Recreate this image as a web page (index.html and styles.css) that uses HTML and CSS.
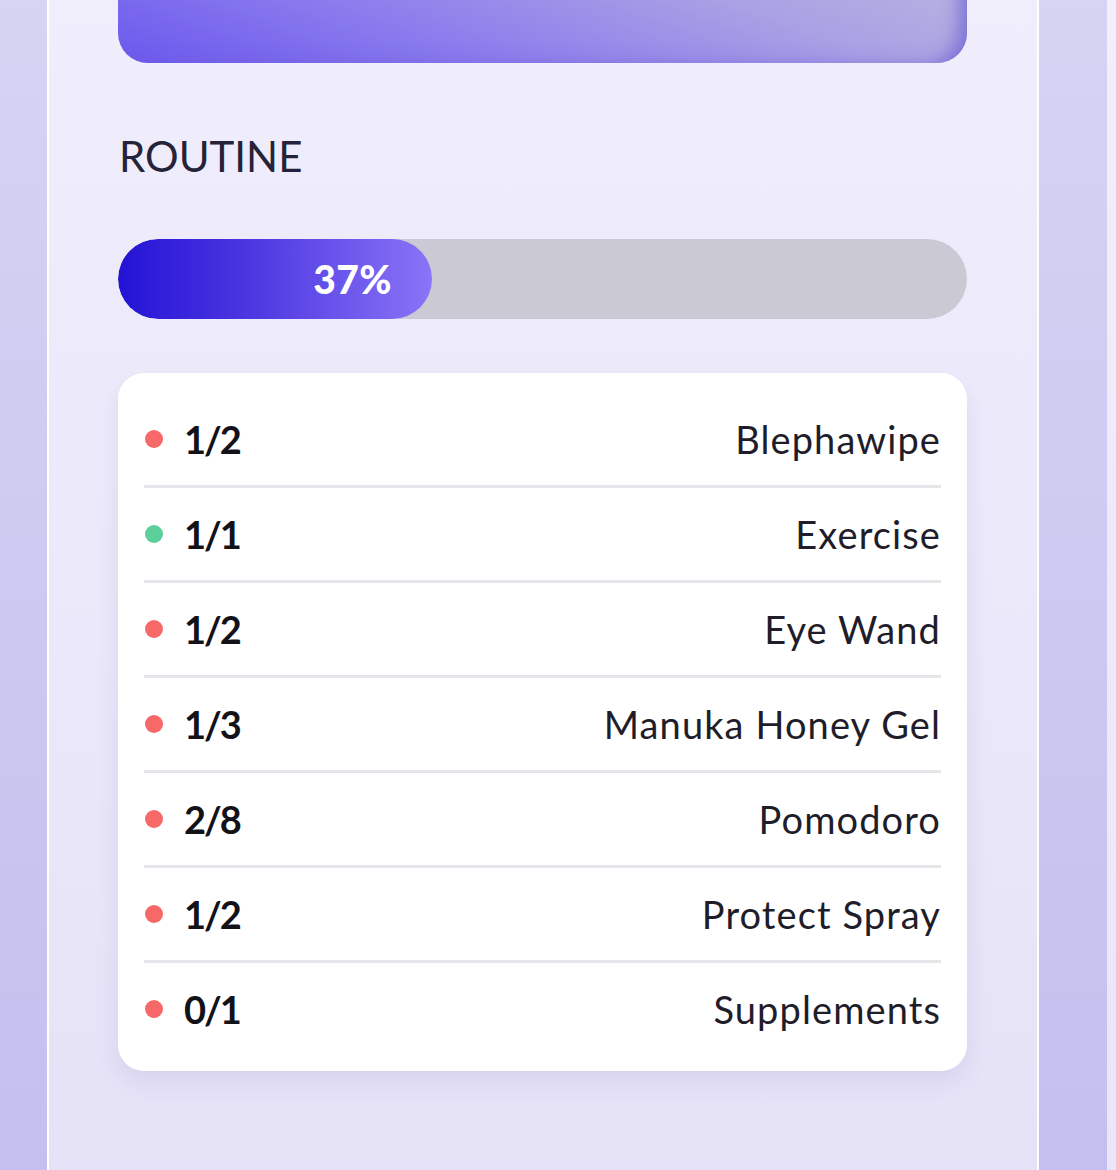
FILE: index.html
```html
<!DOCTYPE html>
<html lang="en">
<head>
<meta charset="utf-8">
<title>Routine</title>
<link rel="stylesheet" href="styles.css">
</head>
<body>
<div class="stage">
  <div class="gutter"></div>
  <section class="panel">
    <div class="hero"></div>
    <h2 class="section-label">ROUTINE</h2>
    <div class="progress">
      <div class="progress-fill" style="width: 37%"><span class="progress-text">37%</span></div>
    </div>
    <ul class="routine-card">
      <li class="routine-row"><span class="dot dot-red"></span><span class="count">1/2</span><span class="name">Blephawipe</span></li>
      <li class="routine-row"><span class="dot dot-green"></span><span class="count">1/1</span><span class="name">Exercise</span></li>
      <li class="routine-row"><span class="dot dot-red"></span><span class="count">1/2</span><span class="name">Eye Wand</span></li>
      <li class="routine-row"><span class="dot dot-red"></span><span class="count">1/3</span><span class="name">Manuka Honey Gel</span></li>
      <li class="routine-row"><span class="dot dot-red"></span><span class="count">2/8</span><span class="name">Pomodoro</span></li>
      <li class="routine-row"><span class="dot dot-red"></span><span class="count">1/2</span><span class="name">Protect Spray</span></li>
      <li class="routine-row"><span class="dot dot-red"></span><span class="count">0/1</span><span class="name">Supplements</span></li>
    </ul>
  </section>
  <div class="gap"></div>
  <section class="panel-next"></section>
</div>
</body>
</html>
```

FILE: styles.css
```css
* { box-sizing: border-box; }
html, body {
  margin: 0;
  padding: 0;
  height: 100%;
}
body {
  background: linear-gradient(180deg, #d6d3f3 0%, #c4bfee 100%);
  font-family: "Lato", "Noto Sans", sans-serif;
  overflow: hidden;
}
.stage {
  display: flex;
  width: 1116px;
  height: 1170px;
  align-items: flex-start;
  overflow: hidden;
}
.gutter { width: 47px; flex: none; }
.gap { width: 68px; flex: none; }
.panel {
  flex: none;
  width: 992px;
  height: 1300px;
  margin-top: -100px;
  border-left: 2px solid #ffffff;
  border-right: 2px solid #ffffff;
  background: linear-gradient(180deg, #f1effc 0%, #ebe9fa 50%, #e5e2f7 100%);
  padding: 0 70px 0 69px;
  display: flex;
  flex-direction: column;
}
.panel-next {
  flex: none;
  width: 9px;
  height: 1170px;
  background: linear-gradient(180deg, #f1effc 0%, #e8e6f9 100%);
}
.hero {
  height: 163px;
  border-radius: 0 0 30px 30px;
  background: linear-gradient(20deg, #6b58ee 0%, #8b7ded 30%, #a8a1e4 60%, #c4c1df 100%);
  box-shadow: inset -16px -4px 18px -8px rgba(110, 96, 210, 0.75);
}
.section-label {
  margin: 68px 0 0 1px;
  font-size: 42px;
  line-height: 50px;
  font-weight: 400;
  letter-spacing: 0;
  color: #26223a;
}
.progress {
  margin-top: 58px;
  height: 80px;
  border-radius: 40px;
  background: #cbcad4;
  overflow: hidden;
}
.progress-fill {
  height: 100%;
  border-radius: 40px;
  background: linear-gradient(90deg, #2413d6 0%, #4a35e0 40%, #8a74f8 100%);
  display: flex;
  align-items: center;
  justify-content: flex-end;
  padding-right: 40px;
}
.progress-text {
  color: #ffffff;
  font-weight: 900;
  font-size: 39px;
  letter-spacing: 0.5px;
}
.routine-card {
  list-style: none;
  margin: 54px 0 0 0;
  padding: 20px 26px 16px;
  background: #ffffff;
  border-radius: 26px;
  box-shadow: 0 10px 22px rgba(100, 90, 170, 0.13);
}
.routine-row {
  height: 95px;
  display: flex;
  align-items: center;
  border-bottom: 3px solid #e5e5ea;
}
.routine-row:last-child { border-bottom: none; height: 92px; }
.dot {
  width: 18px;
  height: 18px;
  border-radius: 50%;
  margin-left: 1px;
  flex: none;
}
.dot-red { background: #f76868; }
.dot-green { background: #5dcf9a; }
.count {
  margin-left: 21px;
  font-weight: 700;
  font-size: 38px;
  letter-spacing: -2px;
  color: #121218;
}
.name {
  margin-left: auto;
  font-size: 38px;
  font-weight: 400;
  color: #1f1d2a;
  letter-spacing: 1.1px;
}
```
